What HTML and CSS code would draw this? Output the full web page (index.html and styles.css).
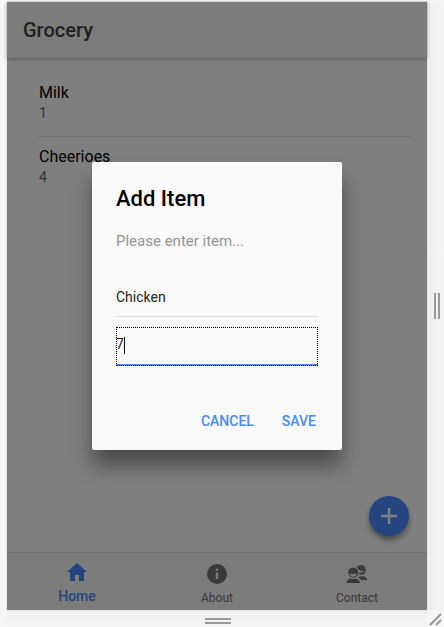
FILE: index.html
```html
<!DOCTYPE html>
<html lang="en">
<head>
<meta charset="utf-8">
<meta name="viewport" content="width=device-width, initial-scale=1">
<title>Grocery</title>
<link rel="stylesheet" href="styles.css">
</head>
<body>
<div class="workspace">
  <div class="device">
    <header class="toolbar"><h1 class="toolbar-title">Grocery</h1></header>
    <main class="content">
      <ul class="list">
        <li class="item"><h2 class="item-name">Milk</h2><p class="item-count">1</p></li>
        <li class="item"><h2 class="item-name">Cheerioes</h2><p class="item-count">4</p></li>
      </ul>
      <button class="fab" type="button" aria-label="Add item">
        <svg width="16" height="16" viewBox="0 0 16 16"><path d="M8 0v16M0 8h16" stroke="currentColor" stroke-width="2.4"/></svg>
      </button>
    </main>
    <nav class="tabs">
      <a class="tab tab-active" href="#home">
        <svg class="tab-icon" viewBox="0 0 24 24"><path d="M10 21v-6h4v6h5v-9h3L12 3 2 12h3v9z"/></svg>
        <span>Home</span>
      </a>
      <a class="tab" href="#about">
        <svg class="tab-icon" viewBox="0 0 24 24"><path fill-rule="evenodd" d="M12 2a10 10 0 1 0 0 20 10 10 0 0 0 0-20zm1.200 15h-2.400v-6.500h2.400zm0-8.200h-2.400V6.600h2.400z"/></svg>
        <span>About</span>
      </a>
      <a class="tab" href="#contact">
        <svg class="tab-icon" viewBox="0 0 24 24">
          <path d="M11.200 5.500C12 4 13.700 3 15.800 3c3 0 5 2 5 4.900 0 2.600-1.700 4.600-4.200 4.900-1 .1-1.900-.1-2.600-.4.300-.7.400-1.300.4-2 1.900.3 3.900-.2 4.900-1.500-1.900.5-3.800.2-5.200-.9-.5-1.100-1.500-2-2.900-2.500z"/>
          <path fill-rule="evenodd" d="M8.200 5.700c3 0 5 2 5 4.900s-2 5.100-5 5.100-5-2.200-5-5.100 2-4.900 5-4.900zm-3.900 5.800c.3 1.900 1.800 3.200 3.900 3.200s3.600-1.300 3.900-3.200c-2.300.5-5.500.5-7.800 0z"/>
          <path d="M1.500 21c.4-2.600 1.700-3.800 4-4.500.8.400 1.700.6 2.700.6s1.900-.2 2.700-.6c2.300.7 3.700 1.900 4.100 4.500zM13.500 14.800c1 0 2.600-.1 4.600-.9 2.400.5 3.900 1.800 4.200 4.100H16.300c-.7-1-1.700-1.700-3.200-2.200z"/>
        </svg>
        <span>Contact</span>
      </a>
    </nav>
    <div class="backdrop">
      <form class="dialog" role="dialog" aria-labelledby="dialog-title">
        <h2 class="dialog-title" id="dialog-title">Add Item</h2>
        <p class="dialog-message">Please enter item...</p>
        <div class="fields">
          <div class="field"><input class="field-input" type="text" aria-label="Item name" value="Chicken"></div>
          <div class="field field-focused"><input class="field-input" type="text" aria-label="Quantity" value="7"><span class="caret"></span></div>
        </div>
        <div class="actions">
          <button class="action" type="button">CANCEL</button>
          <button class="action" type="button">SAVE</button>
        </div>
      </form>
    </div>
  </div>
  <div class="handle-right"><span class="grip grip-vertical"></span></div>
  <div class="handle-bottom"><span class="grip"></span></div>
  <div class="corner"><svg width="14" height="14" viewBox="0 0 14 14"><path d="M1 13L12 2M7 13l5-5" stroke="#999" stroke-width="2"/></svg></div>
</div>
</body>
</html>
```
FILE: styles.css
```css
* {
  box-sizing: border-box;
}

body,
h1,
h2,
p,
ul {
  margin: 0;
  padding: 0;
}

body {
  font-family: Roboto, "Liberation Sans", sans-serif;
  color: #000;
  background: #f4f4f4;
}

button,
input {
  font: inherit;
  border: 0;
}

.workspace {
  display: grid;
  grid-template-columns: 1fr 17px;
  grid-template-rows: 1fr 17px;
  min-height: 100vh;
  padding: 2px 0 0 7px;
  background: #f5f5f5;
}

.device {
  position: relative;
  display: flex;
  flex-direction: column;
  background: #fff;
  box-shadow: 0 0 0 1px #e4e4e4;
}

.toolbar {
  position: relative;
  display: flex;
  align-items: center;
  height: 56px;
  padding: 0 16px;
  background: #f8f8f8;
  box-shadow: 0 1px 4px rgba(0, 0, 0, 0.3);
}

.toolbar-title {
  font-size: 20px;
  font-weight: 500;
  line-height: 24px;
  color: #424242;
}

.content {
  position: relative;
  flex: 1;
  padding: 15px 16px 16px;
}

.list {
  list-style: none;
}

.item {
  height: 64px;
  margin-left: 16px;
  padding-top: 10px;
  border-bottom: 1px solid #dedede;
}

.item:last-child {
  border-bottom: 0;
}

.item-name {
  font-size: 16px;
  font-weight: 400;
  line-height: 20px;
}

.item-count {
  font-size: 14px;
  line-height: 20px;
  color: #666;
}

.fab {
  position: absolute;
  right: 18px;
  bottom: 16px;
  display: flex;
  align-items: center;
  justify-content: center;
  width: 40px;
  height: 40px;
  padding: 0;
  border-radius: 50%;
  color: #fff;
  background: #488aff;
  box-shadow: 0 4px 6px rgba(0, 0, 0, 0.14), 0 4px 5px rgba(0, 0, 0, 0.3);
}

.tabs {
  display: flex;
  height: 58px;
  border-top: 1px solid #dedede;
  background: #f8f8f8;
}

.tab {
  flex: 1;
  display: flex;
  flex-direction: column;
  align-items: center;
  padding-top: 9px;
  gap: 2px;
  font-size: 12px;
  line-height: 20px;
  color: #757575;
  text-decoration: none;
}

.tab-icon {
  width: 24px;
  height: 24px;
  fill: currentColor;
}

.tab-active {
  padding-top: 7px;
  font-size: 14px;
  font-weight: 500;
  color: #488aff;
}

.backdrop {
  position: absolute;
  inset: 0;
  display: flex;
  align-items: center;
  justify-content: center;
  overflow: hidden;
  background: rgba(0, 0, 0, 0.5);
}

.dialog {
  width: 250px;
  border-radius: 2px;
  background: #fafafa;
  box-shadow: 0 16px 20px rgba(0, 0, 0, 0.4);
}

.dialog-title {
  padding: 24px 24px 16px;
  font-size: 22px;
  font-weight: 500;
  line-height: 26px;
}

.dialog-message {
  padding: 4px 24px 30px;
  font-size: 15px;
  line-height: 18px;
  color: #949494;
}

.fields {
  display: flex;
  flex-direction: column;
  gap: 10px;
  padding: 0 24px;
}

.field {
  position: relative;
  display: flex;
  border-bottom: 1px solid #dedede;
}

.field-input {
  width: 100%;
  height: 36px;
  padding: 0 0 2px;
  outline: 0;
  font-size: 14px;
  color: #222;
  background: transparent;
}

.field-focused {
  height: 39px;
  border-bottom: 2px solid #488aff;
  outline: 1px dotted #000;
  outline-offset: -1px;
}

.caret {
  position: absolute;
  top: 10px;
  left: 8px;
  width: 1px;
  height: 17px;
  background: #000;
}

.actions {
  display: flex;
  justify-content: flex-end;
  gap: 8px;
  padding: 36px 16px 10px;
}

.action {
  height: 38px;
  padding: 0 10px;
  font-size: 14px;
  font-weight: 500;
  color: #488aff;
  background: transparent;
}

.handle-right,
.handle-bottom,
.corner {
  display: flex;
  align-items: center;
  justify-content: center;
}

.handle-right {
  padding-left: 3px;
  background: linear-gradient(to right, #eee, #f5f5f5);
}

.handle-bottom {
  padding-top: 5px;
  padding-left: 2px;
  background: linear-gradient(#efefef, #f5f5f5);
}

.grip {
  width: 26px;
  height: 6px;
  border: solid #999;
  border-width: 2px 0;
}

.grip-vertical {
  width: 6px;
  height: 26px;
  border-width: 0 2px;
}
```
